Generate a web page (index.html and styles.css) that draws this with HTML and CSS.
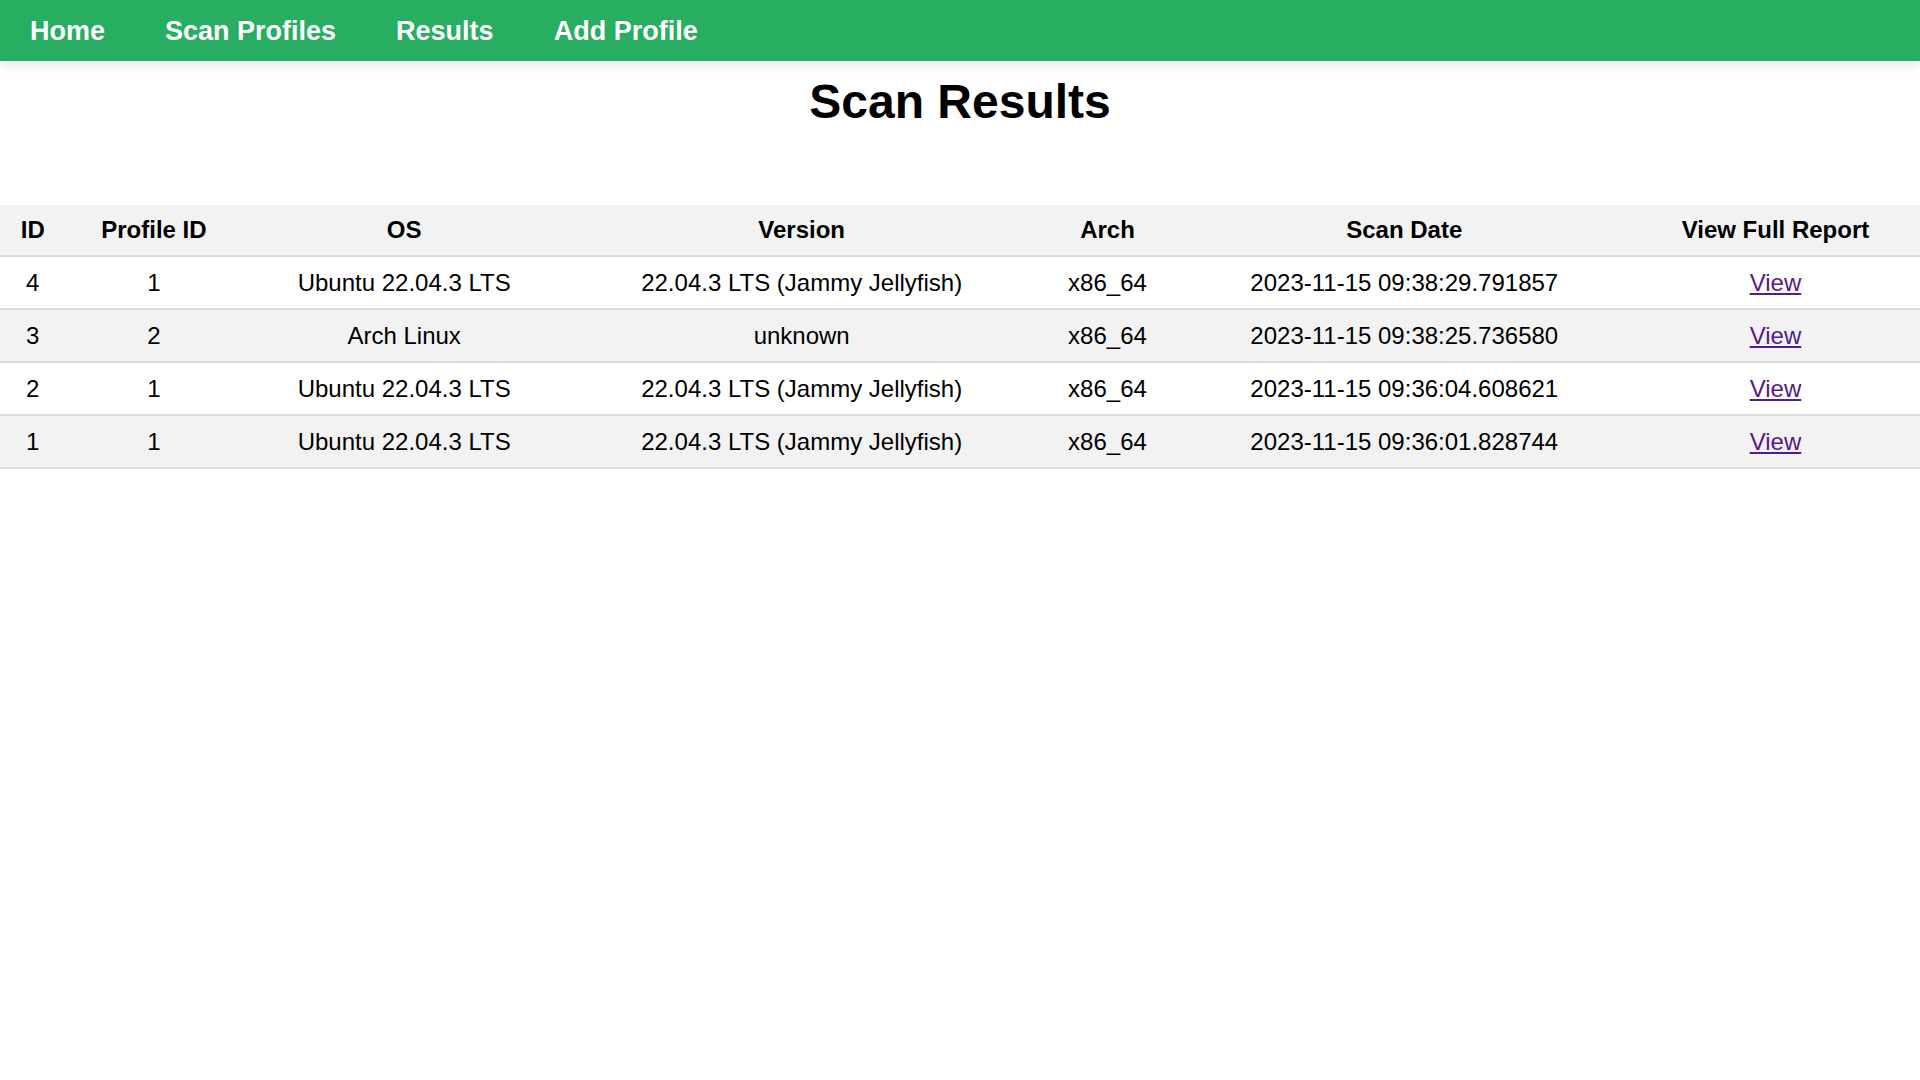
FILE: index.html
```html
<!DOCTYPE html>
<html lang="en">
<head>
<meta charset="utf-8">
<title>Scan Results</title>
<link rel="stylesheet" href="styles.css">
</head>
<body>
<nav class="topnav">
  <a class="nav-link" href="#">Home</a>
  <a class="nav-link" href="#">Scan Profiles</a>
  <a class="nav-link" href="#">Results</a>
  <a class="nav-link" href="#">Add Profile</a>
</nav>
<h1 class="page-title">Scan Results</h1>
<table class="results">
  <thead>
    <tr>
      <th>ID</th>
      <th>Profile ID</th>
      <th>OS</th>
      <th>Version</th>
      <th>Arch</th>
      <th>Scan Date</th>
      <th>View Full Report</th>
    </tr>
  </thead>
  <tbody>
    <tr>
      <td>4</td><td>1</td><td>Ubuntu 22.04.3 LTS</td><td>22.04.3 LTS (Jammy Jellyfish)</td><td>x86_64</td><td>2023-11-15 09:38:29.791857</td><td><a class="view-link" href="#">View</a></td>
    </tr>
    <tr>
      <td>3</td><td>2</td><td>Arch Linux</td><td>unknown</td><td>x86_64</td><td>2023-11-15 09:38:25.736580</td><td><a class="view-link" href="#">View</a></td>
    </tr>
    <tr>
      <td>2</td><td>1</td><td>Ubuntu 22.04.3 LTS</td><td>22.04.3 LTS (Jammy Jellyfish)</td><td>x86_64</td><td>2023-11-15 09:36:04.608621</td><td><a class="view-link" href="#">View</a></td>
    </tr>
    <tr>
      <td>1</td><td>1</td><td>Ubuntu 22.04.3 LTS</td><td>22.04.3 LTS (Jammy Jellyfish)</td><td>x86_64</td><td>2023-11-15 09:36:01.828744</td><td><a class="view-link" href="#">View</a></td>
    </tr>
  </tbody>
</table>
</body>
</html>
```
FILE: styles.css
```css
html, body {
  margin: 0;
  padding: 0;
  background: #fff;
}
body {
  font-family: "Liberation Sans", Arial, sans-serif;
  font-size: 24px;
  color: #000;
}
.topnav {
  display: flex;
  align-items: center;
  height: 61px;
  background: #27ae60;
  box-shadow: 0 3px 12px rgba(0, 0, 0, 0.12);
}
.nav-link {
  display: block;
  padding: 0 30px;
  color: #fff;
  font-weight: bold;
  font-size: 27px;
  line-height: 60px;
  text-decoration: none;
}
.page-title {
  margin: 13px 0 0;
  font-size: 48px;
  line-height: 55px;
  text-align: center;
  font-weight: bold;
}
.results {
  width: 100%;
  margin-top: 76px;
  border-collapse: collapse;
}
.results th,
.results td {
  padding: 12px;
  text-align: center;
  border-bottom: 2px solid #ddd;
  line-height: 27px;
}
.results th {
  background: #f2f2f2;
  font-weight: bold;
  line-height: 26px;
}
.results tbody tr:nth-child(even) {
  background: #f2f2f2;
}
.view-link {
  color: #551a8b;
  text-decoration: underline;
}
```
